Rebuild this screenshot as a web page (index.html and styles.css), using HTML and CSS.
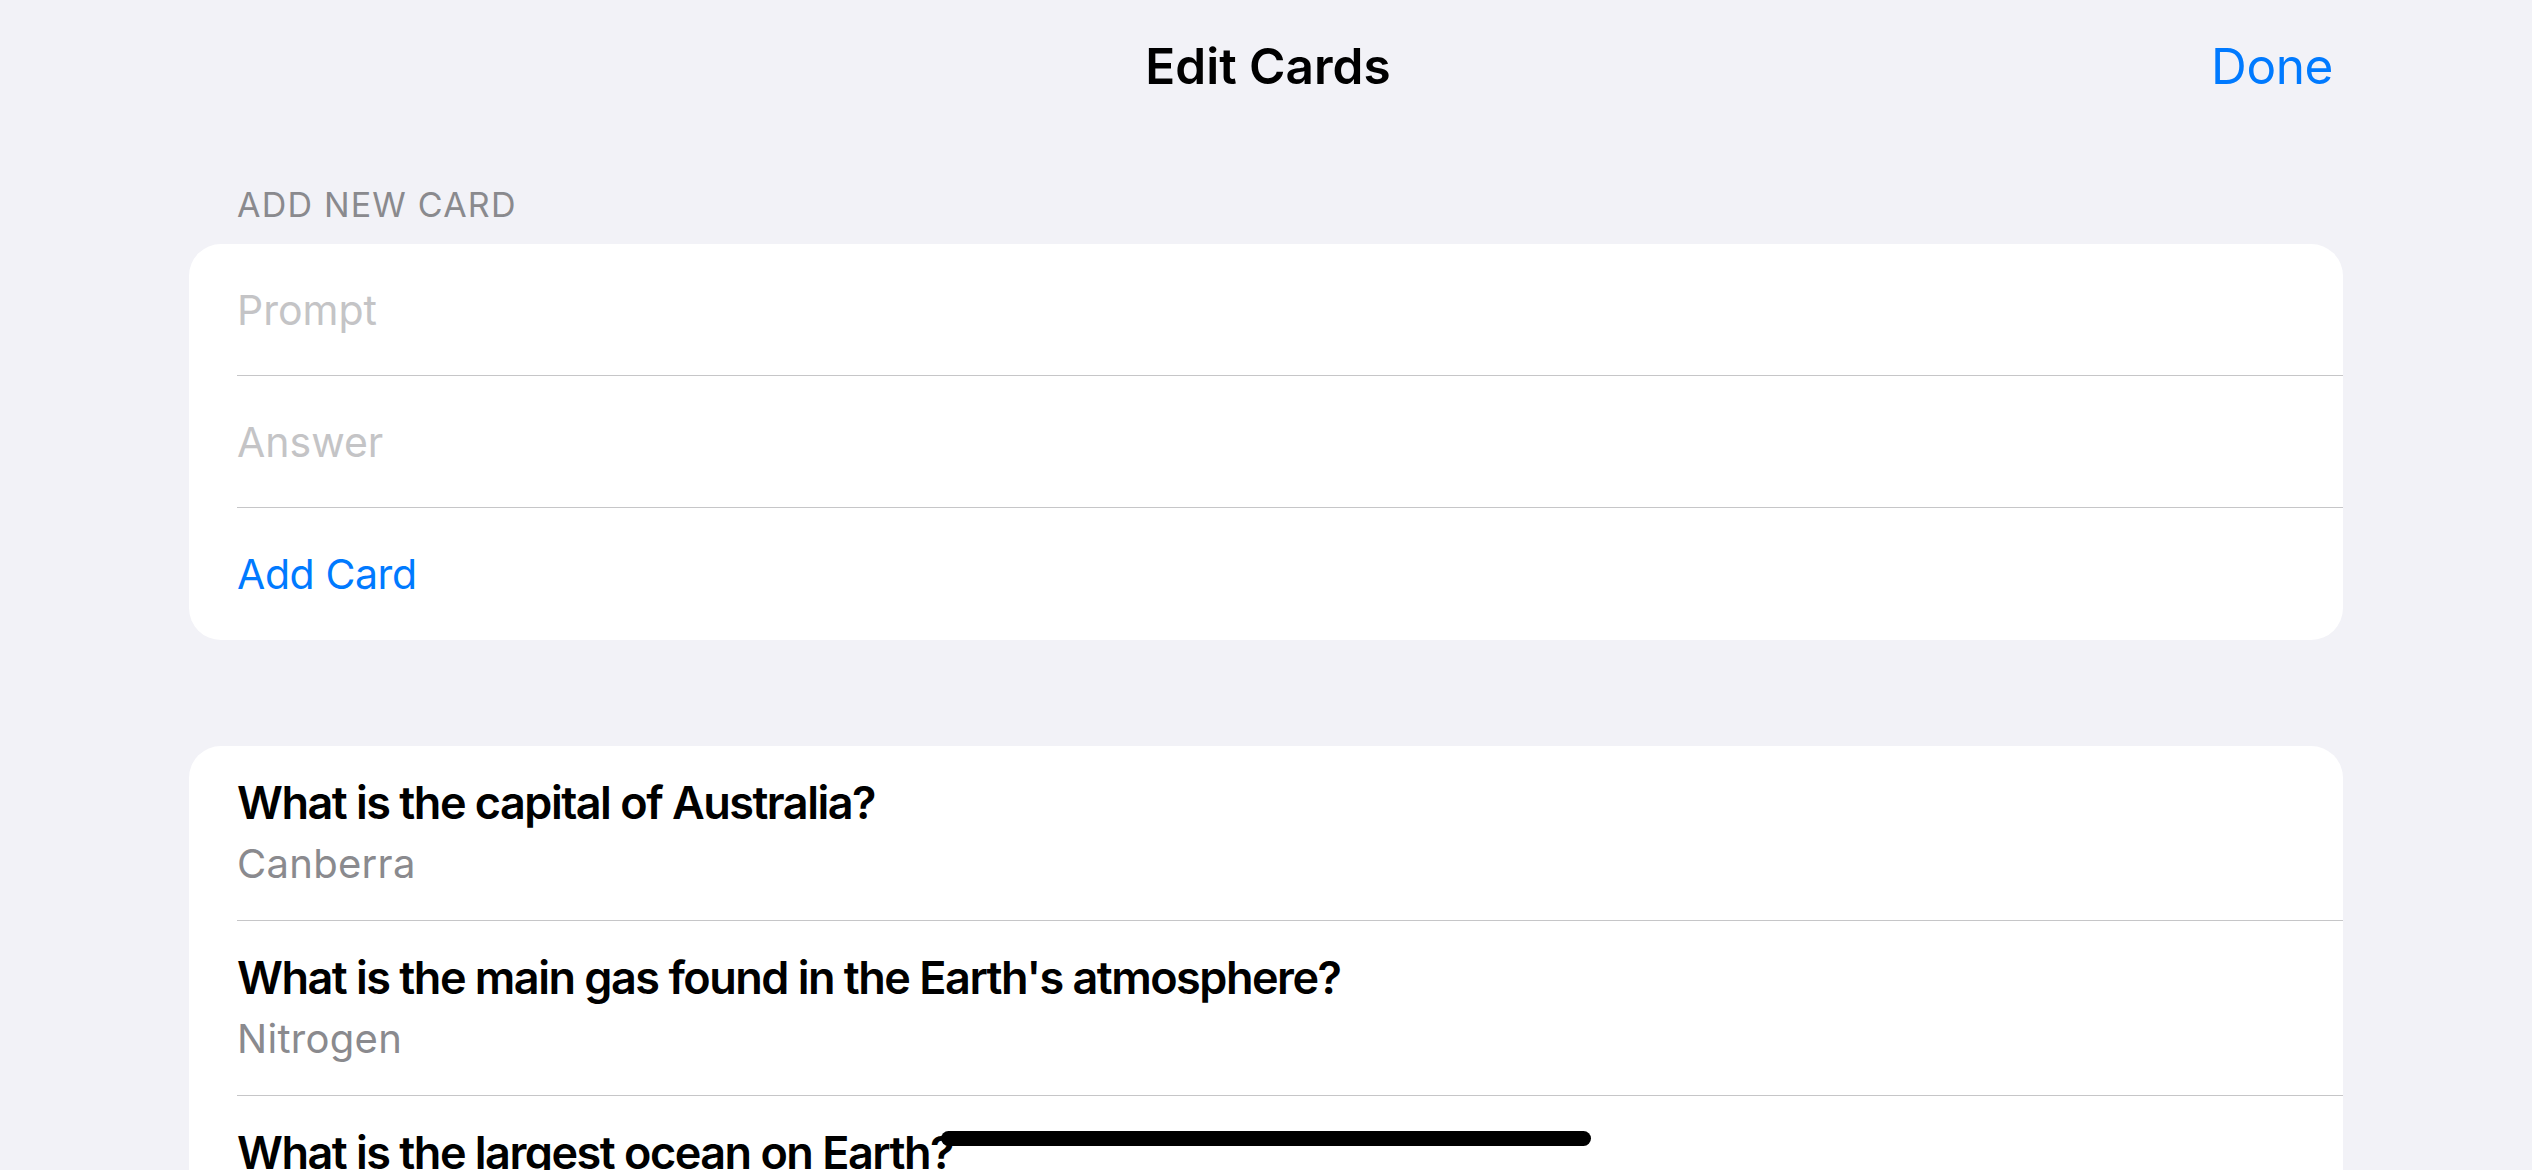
FILE: index.html
```html
<!DOCTYPE html>
<html lang="en">
<head>
<meta charset="utf-8">
<title>Edit Cards</title>
<link rel="stylesheet" href="styles.css">
</head>
<body>
<div class="screen">
  <header class="nav">
    <div class="nav-side"></div>
    <h1 class="nav-title">Edit Cards</h1>
    <div class="nav-side nav-right"><span class="nav-button">Done</span></div>
  </header>

  <main class="content">
    <section class="group">
      <h2 class="group-header">ADD NEW CARD</h2>
      <div class="card">
        <div class="row"><div class="row-inner"><span class="placeholder">Prompt</span></div></div>
        <div class="row"><div class="row-inner"><span class="placeholder">Answer</span></div></div>
        <div class="row"><div class="row-inner last"><span class="action">Add Card</span></div></div>
      </div>
    </section>

    <section class="group group-list">
      <div class="card">
        <div class="qa-row"><div class="qa-inner">
          <div class="question">What is the capital of Australia?</div>
          <div class="answer">Canberra</div>
        </div></div>
        <div class="qa-row"><div class="qa-inner">
          <div class="question">What is the main gas found in the Earth's atmosphere?</div>
          <div class="answer">Nitrogen</div>
        </div></div>
        <div class="qa-row"><div class="qa-inner">
          <div class="question">What is the largest ocean on Earth?</div>
          <div class="answer">Pacific Ocean</div>
        </div></div>
      </div>
    </section>
  </main>

  <div class="home-indicator"></div>
</div>
</body>
</html>
```

FILE: styles.css
```css
* {
  box-sizing: border-box;
}

html, body {
  margin: 0;
  padding: 0;
}

body {
  background: #f2f2f7;
  font-family: Inter, "Noto Sans", "Liberation Sans", sans-serif;
  color: #000;
}

.screen {
  position: relative;
  width: 2532px;
  height: 1170px;
  overflow: hidden;
  background: #f2f2f7;
}

/* Navigation bar */
.nav {
  height: 132px;
  display: grid;
  grid-template-columns: 1fr auto 1fr;
  align-items: center;
  padding: 0 199px;
}

.nav-title {
  margin: 0;
  font-size: 49.5px;
  font-weight: 600;
  letter-spacing: 0px;
  line-height: 60px;
  text-align: center;
  transform: translateX(2px);
}

.nav-right {
  display: flex;
  justify-content: flex-end;
}

.nav-button {
  font-size: 49.5px;
  font-weight: 400;
  line-height: 60px;
  color: #007aff;
  letter-spacing: -0.4px;
}

/* Content */
.content {
  padding: 0 189px;
}

.group-header {
  margin: 0;
  padding: 53px 0 19px 48px;
  font-size: 34px;
  line-height: 40px;
  font-weight: 400;
  color: #8a8a8e;
  letter-spacing: 1.2px;
}

.card {
  background: #fff;
  border-radius: 32px;
  overflow: hidden;
}

.row {
  height: 132px;
  padding-left: 48px;
}

.row-inner {
  height: 100%;
  display: flex;
  align-items: center;
  border-bottom: 1px solid #c6c6c8;
  font-size: 41px;
  line-height: 50px;
}

.row-inner.last {
  border-bottom: none;
}

.placeholder {
  color: #c4c4c6;
}

.action {
  color: #007aff;
  letter-spacing: -0.4px;
}

.group-list {
  margin-top: 106px;
}

.qa-row {
  height: 175px;
  padding-left: 48px;
}

.qa-inner {
  height: 100%;
  padding-top: 28px;
  border-bottom: 1px solid #c6c6c8;
}

.question {
  font-size: 45px;
  line-height: 58px;
  font-weight: 600;
  letter-spacing: -1.5px;
}

.answer {
  font-size: 40px;
  line-height: 64px;
  color: #8a8a8e;
  letter-spacing: 0.3px;
}

/* Home indicator overlays content */
.home-indicator {
  position: absolute;
  left: 50%;
  bottom: 24px;
  width: 650px;
  height: 15px;
  margin-left: -325px;
  border-radius: 8px;
  background: #000;
}
```
